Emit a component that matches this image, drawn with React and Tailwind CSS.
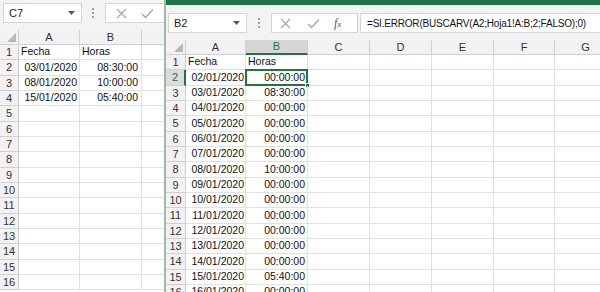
import React from 'react';

const rowH = (i) => (i % 3 === 1 ? 'h-[16px]' : 'h-[15px]');

const leftRows = [
  ['Fecha', 'Horas'],
  ['03/01/2020', '08:30:00'],
  ['08/01/2020', '10:00:00'],
  ['15/01/2020', '05:40:00'],
];

const hoursByDay = { 3: '08:30:00', 8: '10:00:00', 15: '05:40:00' };
const rightRows = [['Fecha', 'Horas']];
for (let d = 2; d <= 17; d++) {
  const dd = String(d).padStart(2, '0');
  rightRows.push([`${dd}/01/2020`, hoursByDay[d] || '00:00:00']);
}

function Cross() {
  return (
    <svg width="11" height="11" viewBox="0 0 11 11">
      <path d="M1 1 L10 10 M10 1 L1 10" stroke="#a6a6a6" strokeWidth="1.2" fill="none" />
    </svg>
  );
}

function Check() {
  return (
    <svg width="13" height="11" viewBox="0 0 13 11">
      <path d="M1 6 L4.5 9.5 L12 1.5" stroke="#a6a6a6" strokeWidth="1.3" fill="none" />
    </svg>
  );
}

function Dots() {
  return (
    <div className="flex flex-col gap-[2px]">
      <span className="w-[2px] h-[2px] bg-[#a0a0a0]" />
      <span className="w-[2px] h-[2px] bg-[#a0a0a0]" />
      <span className="w-[2px] h-[2px] bg-[#a0a0a0]" />
    </div>
  );
}

function NameBox({ name }) {
  return (
    <div className="w-[79px] h-[20px] shrink-0 bg-white border border-[#d4d4d4] flex items-center justify-between pl-[5px] pr-[6px] text-[11px] text-[#222]">
      <span>{name}</span>
      <svg width="7" height="4" viewBox="0 0 7 4">
        <path d="M0 0 L7 0 L3.5 4 Z" fill="#555" />
      </svg>
    </div>
  );
}

function Corner({ w }) {
  return (
    <div className={`${w} shrink-0 h-[15px] bg-[#f2f2f2] border-r border-b border-[#d0d0d0] flex items-end justify-end pr-[2px] pb-[2px]`}>
      <svg width="9" height="9" viewBox="0 0 9 9">
        <path d="M9 0 L9 9 L0 9 Z" fill="#b8b8b8" />
      </svg>
    </div>
  );
}

function LeftWindow() {
  const cols = ['A', 'B', 'C'];
  const widths = ['w-[61px]', 'w-[62px]', 'w-[62px]'];
  return (
    <div className="w-[164px] shrink-0 overflow-hidden flex flex-col bg-white">
      <div className="h-[30px] shrink-0 bg-[#f3f3f3] flex items-start pl-[3px] pt-[3px]">
        <NameBox name="C7" />
        <div className="ml-[10px] mt-[5px]">
          <Dots />
        </div>
        <div className="ml-[11px] w-[90px] h-[20px] shrink-0 bg-white border border-[#d4d4d4] flex items-center pl-[10px] gap-[14px]">
          <Cross />
          <Check />
        </div>
      </div>
      <div className="flex shrink-0">
        <Corner w="w-[19px]" />
        {cols.map((c, i) => (
          <div
            key={c}
            className={`${widths[i]} shrink-0 h-[15px] bg-[#f2f2f2] border-r border-b border-[#d0d0d0] flex items-center justify-center text-[11px] text-[#333]`}
          >
            {c}
          </div>
        ))}
      </div>
      {Array.from({ length: 16 }).map((_, i) => {
        const data = leftRows[i];
        const isHeader = i === 0;
        return (
          <div key={i} className={`flex shrink-0 ${rowH(i)}`}>
            <div className="w-[19px] shrink-0 bg-[#f2f2f2] border-r border-b border-[#d0d0d0] flex items-center justify-center text-[11px] text-[#333]">
              {i + 1}
            </div>
            <div className={`w-[61px] shrink-0 border-r border-b border-[#e1e1e1] flex items-center text-[10.5px] text-[#111] ${isHeader ? 'justify-start pl-[2px]' : 'justify-end pr-[2px]'}`}>
              {data ? data[0] : ''}
            </div>
            <div className={`w-[62px] shrink-0 border-r border-b border-[#e1e1e1] flex items-center text-[10.5px] text-[#111] ${isHeader ? 'justify-start pl-[2px]' : 'justify-end pr-[3px]'}`}>
              {data ? data[1] : ''}
            </div>
            <div className="w-[62px] shrink-0 border-r border-b border-[#e1e1e1]" />
          </div>
        );
      })}
    </div>
  );
}

function RightWindow() {
  const cols = [
    ['A', 'w-[60px]'],
    ['B', 'w-[62px]'],
    ['C', 'w-[62px]'],
    ['D', 'w-[62px]'],
    ['E', 'w-[62px]'],
    ['F', 'w-[61px]'],
    ['G', 'w-[62px]'],
  ];
  return (
    <div className="flex-1 min-w-0 overflow-hidden flex flex-col bg-white border-l-2 border-[#9dbaa4]">
      <div className="h-[5px] shrink-0 bg-[#217346]" />
      <div className="h-[35px] shrink-0 bg-[#f3f3f3] flex items-start pl-[2px] pt-[8px]">
        <NameBox name="B2" />
        <div className="ml-[11px] mt-[5px]">
          <Dots />
        </div>
        <div className="ml-[11px] w-[87px] h-[20px] shrink-0 bg-white border border-[#d4d4d4] flex items-center pl-[8px]">
          <Cross />
          <span className="ml-[16px]">
            <Check />
          </span>
          <span className="ml-[14px] font-['Liberation_Serif',serif] italic text-[12px] text-[#555] leading-none">
            f<span className="text-[9px]">x</span>
          </span>
        </div>
        <div className="ml-[2px] flex-1 h-[20px] bg-white border border-[#d4d4d4] border-r-0 flex items-center pl-[6px] text-[10px] tracking-[-0.2px] text-[#111] whitespace-nowrap overflow-hidden">
          =SI.ERROR(BUSCARV(A2;Hoja1!A:B;2;FALSO);0)
        </div>
      </div>
      <div className="flex shrink-0">
        <Corner w="w-[20px]" />
        {cols.map(([c, w]) => (
          <div
            key={c}
            className={`${w} shrink-0 h-[15px] border-r border-[#d0d0d0] flex items-center justify-center text-[11px] ${
              c === 'B'
                ? 'bg-[#d6d6d6] text-[#217346] border-b-2 border-b-[#217346]'
                : 'bg-[#f2f2f2] text-[#333] border-b'
            }`}
          >
            {c}
          </div>
        ))}
      </div>
      {rightRows.map((data, i) => {
        const isHeader = i === 0;
        const sel = i === 1;
        return (
          <div key={i} className={`flex shrink-0 ${rowH(i)}`}>
            <div
              className={`w-[20px] shrink-0 border-b border-[#d0d0d0] flex items-center justify-center text-[11px] ${
                sel
                  ? 'bg-[#dcdcdc] text-[#217346] border-r-2 border-r-[#217346]'
                  : 'bg-[#f2f2f2] text-[#333] border-r'
              }`}
            >
              {i + 1}
            </div>
            <div className={`w-[60px] shrink-0 border-r border-b border-[#e1e1e1] flex items-center text-[10.5px] text-[#111] ${isHeader ? 'justify-start pl-[2px]' : 'justify-end pr-[1px]'}`}>
              {data[0]}
            </div>
            <div className={`relative w-[62px] shrink-0 border-r border-b border-[#e1e1e1] flex items-center text-[10.5px] text-[#111] ${isHeader ? 'justify-start pl-[2px]' : 'justify-end pr-[2px]'}`}>
              {data[1]}
              {sel && (
                <>
                  <div className="absolute -left-[1px] -top-[1px] -right-[1px] -bottom-[1px] border-2 border-[#217346]" />
                  <div className="absolute -right-[3px] -bottom-[3px] w-[5px] h-[5px] bg-[#217346] border border-white" />
                </>
              )}
            </div>
            {cols.slice(2).map(([c, w]) => (
              <div key={c} className={`${w} shrink-0 border-r border-b border-[#e1e1e1]`} />
            ))}
          </div>
        );
      })}
    </div>
  );
}

export default function App() {
  return (
    <div className="w-[600px] h-[292px] flex overflow-hidden bg-white font-['Liberation_Sans',Arial,sans-serif]">
      <LeftWindow />
      <RightWindow />
    </div>
  );
}
